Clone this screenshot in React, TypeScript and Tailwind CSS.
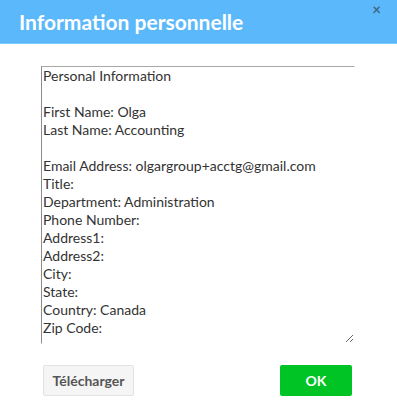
import React from "react";

const details = `Personal Information

First Name: Olga
Last Name: Accounting

Email Address: olgargroup+acctg@gmail.com
Title:
Department: Administration
Phone Number:
Address1:
Address2:
City:
State:
Country: Canada
Zip Code:`;

export default function App() {
  return (
    <div className="w-[397px] h-[409px] bg-white font-['Lato',sans-serif]">
      {/* header */}
      <div className="relative h-[44px] bg-[#5bb9fb] border-b border-[#7ec8fb] flex items-center px-[19px]">
        <h1 className="text-white font-bold text-[21px] leading-none">Information personnelle</h1>
        <span className="absolute right-[16px] top-[2px] text-[#3f6a88] text-[15px] font-bold leading-none">×</span>
      </div>

      <div className="pl-[41px] pt-[22px]">
        <textarea
          readOnly
          defaultValue={details}
          className="block w-[314px] h-[278px] border-t border-l border-t-[#a8a8a8] border-l-[#8c8c8c] border-r border-b border-r-white border-b-white px-[1px] py-0 text-[14px] leading-[18px] text-[#333] font-['Lato',sans-serif] outline-none resize-y"
        />
      </div>

      <div className="flex justify-between pl-[43px] pr-[45px] pt-[21px]">
        <button className="h-[31px] w-[91px] rounded-[2px] border border-[#e2e2e2] bg-[#f5f5f5] text-[14px] font-bold text-[#555]">
          Télécharger
        </button>
        <button className="h-[31px] w-[72px] rounded-[2px] bg-[#00c425] text-[14px] font-bold text-white">
          OK
        </button>
      </div>
    </div>
  );
}
